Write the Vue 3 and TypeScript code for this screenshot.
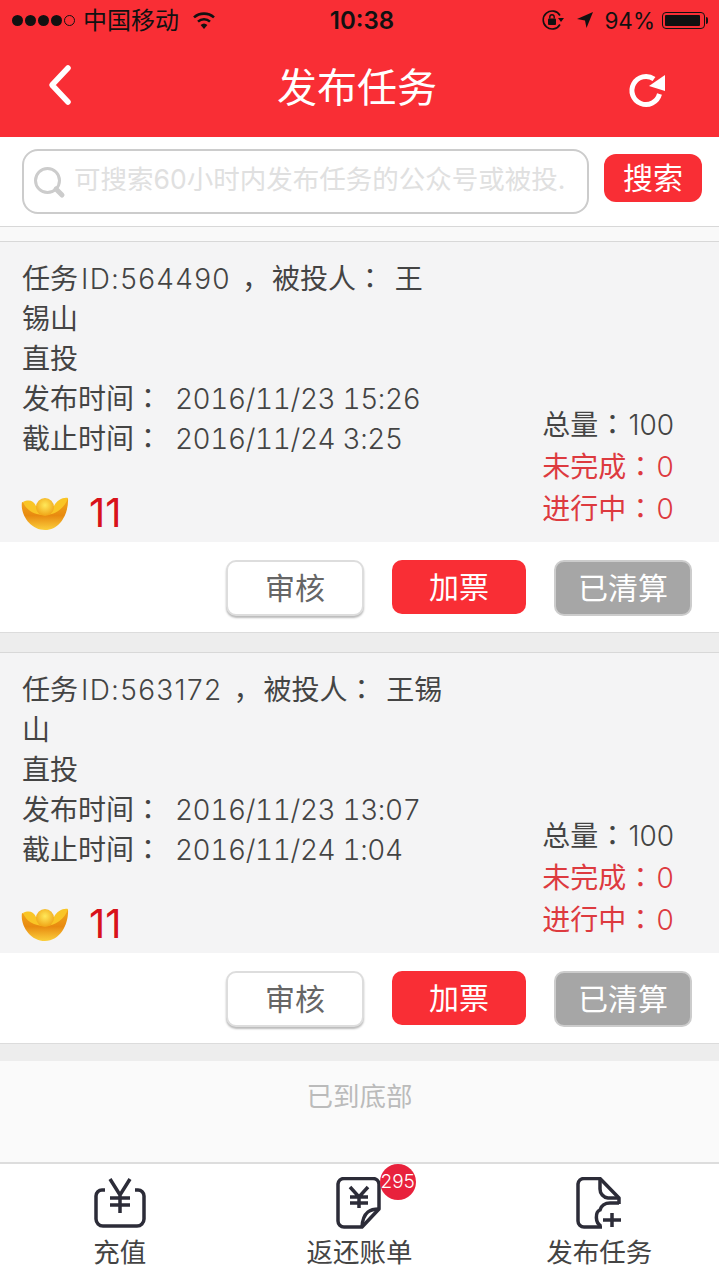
<script setup lang="ts">
interface Task {
  id: string;
  nameHead: string;
  nameTail: string;
  published: string;
  deadline: string;
}

const tasks: Task[] = [
  {
    id: "564490",
    nameHead: "王",
    nameTail: "锡山",
    published: "2016/11/23 15:26",
    deadline: "2016/11/24 3:25",
  },
  {
    id: "563172",
    nameHead: "王锡",
    nameTail: "山",
    published: "2016/11/23 13:07",
    deadline: "2016/11/24 1:04",
  },
];
</script>

<template>
  <div class="page">
    <header class="head">
      <div class="status">
        <div class="status-left">
          <span class="dots"><i></i><i></i><i></i><i></i><i class="empty"></i></span>
          <span class="carrier">中国移动</span>
          <svg class="wifi" width="24" height="20" viewBox="0 0 24 20">
            <path d="M12 19 L8.6 15 A5 5 0 0 1 15.4 15 Z" fill="#111" />
            <path d="M6 11.6 A9 9 0 0 1 18 11.6" fill="none" stroke="#111" stroke-width="2.6" />
            <path d="M2 7.4 A15 15 0 0 1 22 7.4" fill="none" stroke="#111" stroke-width="2.6" />
          </svg>
        </div>
        <span class="time">10:38</span>
        <div class="status-right">
          <svg width="24" height="22" viewBox="0 0 24 22">
            <path d="M19 6.5 A9 9 0 1 0 19 15.5" fill="none" stroke="#111" stroke-width="1.6" />
            <path d="M17 9 L23 9 L20 13 Z" fill="#111" />
            <rect x="7" y="9.5" width="8" height="6.5" rx="1" fill="#111" />
            <path d="M8.8 9.5 V8 A2.2 2.2 0 0 1 13.2 8 V9.5" fill="none" stroke="#111" stroke-width="1.4" />
          </svg>
          <svg class="arrow" width="18" height="18" viewBox="0 0 18 18">
            <path d="M17 1 L1 8 L9 9.5 L10.5 17 Z" fill="#111" />
          </svg>
          <span class="pct">94%</span>
          <span class="battery"><b></b></span>
        </div>
      </div>
      <nav class="nav">
        <svg class="back" width="26" height="42" viewBox="0 0 26 42">
          <path d="M21 4 L5 21 L21 38" fill="none" stroke="#fff" stroke-width="5.5" stroke-linecap="round" stroke-linejoin="round" />
        </svg>
        <h1>发布任务</h1>
        <svg class="refresh" width="40" height="40" viewBox="0 0 40 40">
          <path d="M32.500 25 A14 14 0 1 1 27 10" fill="none" stroke="#fff" stroke-width="5" />
          <path d="M38 6 V22 L22 17 Z" fill="#fff" />
        </svg>
      </nav>
    </header>

    <section class="search">
      <div class="search-box">
        <svg width="36" height="36" viewBox="0 0 36 36">
          <circle cx="15.500" cy="16.500" r="12" fill="none" stroke="#ccc" stroke-width="3" />
          <path d="M24 25 L30 31" stroke="#ccc" stroke-width="5" stroke-linecap="round" />
        </svg>
        <span class="placeholder">可搜索60小时内发布任务的公众号或被投.</span>
      </div>
      <button class="search-btn">搜索</button>
    </section>
    <div class="search-gap"></div>

    <article v-for="task in tasks" :key="task.id" class="task">
      <div class="task-body">
        <div class="task-info">
          <p>任务<span class="task-id">ID:{{ task.id }}</span><span class="sep">，</span>被投人<span class="colon">：</span> {{ task.nameHead }}</p>
          <p>{{ task.nameTail }}</p>
          <p>直投</p>
          <p>发布时间<span class="colon">：</span> <span class="num">{{ task.published }}</span></p>
          <p>截止时间<span class="colon">：</span> <span class="num">{{ task.deadline }}</span></p>
          <div class="reward">
            <svg width="48" height="36" viewBox="0 0 48 36">
              <defs>
                <linearGradient id="ingot" x1="0" y1="0" x2="0" y2="1">
                  <stop offset="0" stop-color="#f2a81c" />
                  <stop offset="0.55" stop-color="#e88a10" />
                  <stop offset="1" stop-color="#fbcf3c" />
                </linearGradient>
                <radialGradient id="ball" cx="0.5" cy="0.4" r="0.6">
                  <stop offset="0" stop-color="#ffe95a" />
                  <stop offset="1" stop-color="#f0a416" />
                </radialGradient>
              </defs>
              <path d="M1 6 C6 8 14 11 24 11 C34 11 42 8 47 2 C48 16 40 34 24 34 C9 34 -1 18 1 6 Z" fill="url(#ingot)" />
              <path d="M2 6 C8 3 13 5 15 10 L33 10 C36 4 42 1 47 2 C44 12 34 19 24 19 C13 19 5 14 2 6 Z" fill="#f9c526" />
              <circle cx="24" cy="11" r="9" fill="url(#ball)" />
            </svg>
            <span>11</span>
          </div>
        </div>
        <div class="task-stats">
          <p>总量<span class="colon">：</span><span class="stat-num">100</span></p>
          <p class="alert">未完成<span class="colon">：</span><span class="stat-num">0</span></p>
          <p class="alert">进行中<span class="colon">：</span><span class="stat-num">0</span></p>
        </div>
      </div>
      <div class="task-actions">
        <button class="btn btn-plain">审核</button>
        <button class="btn btn-red">加票</button>
        <button class="btn btn-grey">已清算</button>
      </div>
    </article>

    <div class="bottom-note">已到底部</div>

    <footer class="tabs">
      <div class="tab">
        <svg width="60" height="52" viewBox="0 0 60 52">
          <path d="M15 13 H12 A6 6 0 0 0 6 19 V42 A7 7 0 0 0 13 49 H47 A7 7 0 0 0 54 42 V19 A6 6 0 0 0 48 13 H45" fill="none" stroke="#2c2c38" stroke-width="3.500" />
          <path d="M20 2 L30 18 L40 2 M30 18 V36 M20 21 H40 M20 28 H40" fill="none" stroke="#2c2c38" stroke-width="3.500" />
        </svg>
        <span>充值</span>
      </div>
      <div class="tab">
        <span class="badge">295</span>
        <svg width="60" height="52" viewBox="0 0 60 52">
          <path d="M33 50 H15 A6 6 0 0 1 9 44 V7 A6 6 0 0 1 15 1.500 H44 A6 6 0 0 1 50 7 V32 Z" fill="none" stroke="#2c2c38" stroke-width="3.500" stroke-linejoin="round" />
          <path d="M50 32 C42 32 34 34 33 50" fill="none" stroke="#2c2c38" stroke-width="3.500" />
          <path d="M21 10 L30 20 L39 10 M30 20 V31 M21 20 H39 M21 26 H39" fill="none" stroke="#2c2c38" stroke-width="3.500" />
        </svg>
        <span>返还账单</span>
      </div>
      <div class="tab">
        <svg width="60" height="52" viewBox="0 0 60 52">
          <path d="M33 50 H15 A6 6 0 0 1 9 44 V7 A6 6 0 0 1 15 1.500 H31 L50 21 V27" fill="none" stroke="#2c2c38" stroke-width="3.500" stroke-linejoin="round" />
          <path d="M31 1.500 V12 A9 9 0 0 0 39 21 H50" fill="none" stroke="#2c2c38" stroke-width="3.500" />
          <path d="M50 26 H41 C36 26 32 29 31 33 C26 35 26 46 32 49" fill="none" stroke="#2c2c38" stroke-width="3.500" />
          <path d="M43 36 V50 M34 43 H52" fill="none" stroke="#2c2c38" stroke-width="3.500" />
        </svg>
        <span>发布任务</span>
      </div>
    </footer>
  </div>
</template>

<style>
html,
body {
  margin: 0;
  background: #fff;
}
</style>

<style scoped>
.page {
  width: 719px;
  height: 1280px;
  overflow: hidden;
  display: flex;
  flex-direction: column;
  background: #ededed;
  font-family: Inter, "Noto Sans CJK SC", sans-serif;
  color: #444;
}

p {
  margin: 0;
}

.head {
  height: 137px;
  background: #f92e35;
}

.status {
  height: 40px;
  display: grid;
  grid-template-columns: 1fr auto 1fr;
  align-items: center;
  padding: 0 11px 0 12px;
  color: #111;
  font-size: 24px;
}

.status-left,
.status-right {
  display: flex;
  align-items: center;
}

.status-right {
  justify-content: flex-end;
}

.dots {
  display: flex;
  gap: 2px;
  margin-right: 8px;
}

.dots i {
  width: 11px;
  height: 11px;
  border-radius: 50%;
  background: #111;
}

.dots i.empty {
  width: 9px;
  height: 9px;
  background: none;
  border: 1px solid #111;
}

.carrier {
  padding-bottom: 3px;
}

.wifi {
  margin-left: 13px;
}

.time {
  margin-left: 4px;
  font-weight: 600;
  font-size: 24px;
}

.arrow {
  margin-left: 11px;
}

.pct {
  margin-left: 10px;
  font-size: 22.500px;
}

.battery {
  position: relative;
  width: 43px;
  height: 17px;
  margin-left: 7px;
  margin-right: 3px;
  padding: 2px;
  box-sizing: border-box;
  border: 1px solid #111;
  border-radius: 4px;
}

.battery::after {
  content: "";
  position: absolute;
  right: -4px;
  top: 4px;
  width: 2px;
  height: 7px;
  background: #111;
  border-radius: 0 2px 2px 0;
}

.battery b {
  display: block;
  height: 100%;
  width: 94%;
  background: #111;
  border-radius: 1px;
}

.nav {
  height: 97px;
  display: grid;
  grid-template-columns: 1fr auto 1fr;
  align-items: center;
  padding: 0 52px 8px 47px;
  box-sizing: border-box;
}

.nav h1 {
  margin: 0;
  font-size: 40px;
  font-weight: 400;
  color: #fff;
}

.refresh {
  justify-self: end;
  margin-top: 8px;
}

.search {
  height: 90px;
  box-sizing: border-box;
  display: flex;
  align-items: center;
  gap: 15px;
  padding: 0 17px 0 22px;
  background: #fff;
  border-bottom: 1px solid #d8d8d8;
}

.search-gap {
  height: 14px;
  background: #f9f9f9;
}

.search-box {
  flex: 1;
  height: 65px;
  box-sizing: border-box;
  display: flex;
  align-items: center;
  gap: 6px;
  padding: 0 8px;
  border: 2px solid #ccc;
  border-radius: 16px;
  overflow: hidden;
}

.placeholder {
  padding-bottom: 9px;
  font-size: 26.500px;
  color: #e0e0e0;
  white-space: nowrap;
}

.search-btn {
  width: 98px;
  height: 48px;
  margin-bottom: 7px;
  padding: 0 0 4px;
  border: 0;
  border-radius: 12px;
  background: #f92e35;
  color: #fff;
  font: inherit;
  font-size: 30px;
}

.task {
  border-top: 1px solid #d8d8d8;
  border-bottom: 1px solid #dcdcdc;
}

.task + .task {
  margin-top: 19px;
}

.task-body {
  height: 300px;
  box-sizing: border-box;
  display: flex;
  justify-content: space-between;
  padding: 17px 45px 12px 22px;
  background: #f4f4f5;
  font-size: 28px;
  line-height: 40px;
}

.task-info p {
  white-space: pre;
}

.colon {
  font-family: "Noto Sans CJK TC", sans-serif;
  line-height: 0;
}

.task-info .colon {
  margin-right: 3px;
}

.sep {
  margin: 0 2px 0 11px;
}

.task-id {
  margin-left: 3px;
  font-weight: 300;
  letter-spacing: 1.3px;
}

.num {
  margin-left: 2px;
  font-weight: 300;
  font-variant-numeric: tabular-nums;
  letter-spacing: -0.4px;
}

.stat-num {
  margin-left: 2px;
  font-weight: 300;
}

.reward {
  display: flex;
  align-items: center;
  gap: 20px;
  margin-top: 32px;
  font-size: 40px;
  line-height: 44px;
  color: #d8121a;
}

.reward svg {
  margin-left: -1px;
  margin-top: 1px;
}

.task-stats {
  align-self: flex-end;
  line-height: 42px;
}

.alert {
  color: #dd3a3f;
}

.task-actions {
  height: 90px;
  box-sizing: border-box;
  display: flex;
  align-items: flex-start;
  justify-content: flex-end;
  gap: 28px;
  padding: 18px 27px 0 0;
  background: #fff;
}

.btn {
  height: 56px;
  padding: 0 0 5px;
  box-sizing: border-box;
  border-radius: 10px;
  font: inherit;
  font-size: 30px;
}

.btn-plain {
  width: 138px;
  background: #fff;
  color: #666;
  border: 2px solid #ddd;
  box-shadow: 0 2px 2px #bbb;
}

.btn-red {
  width: 134px;
  height: 54px;
  background: #f92e35;
  color: #fff;
  border: 0;
}

.btn-grey {
  width: 138px;
  background: #a6a6a6;
  color: #fff;
  border: 2px solid #ccc;
}

.bottom-note {
  flex: 1;
  margin-top: 17px;
  padding-top: 16px;
  text-align: center;
  background: #fafafa;
  color: #bbb;
  font-size: 26.500px;
  line-height: 38px;
}

.tabs {
  height: 118px;
  box-sizing: border-box;
  display: grid;
  grid-template-columns: repeat(3, 1fr);
  background: #fff;
  border-top: 2px solid #ddd;
}

.tab {
  position: relative;
  display: flex;
  flex-direction: column;
  align-items: center;
  padding-top: 13px;
  font-size: 26.500px;
  line-height: 38px;
  color: #444;
}

.tab svg {
  margin-bottom: 4px;
}

.badge {
  position: absolute;
  left: 140px;
  top: 0;
  width: 36px;
  height: 36px;
  border-radius: 50%;
  background: #e8213c;
  color: #fff;
  font-size: 19px;
  line-height: 36px;
  text-align: center;
  font-weight: 300;
}
</style>
